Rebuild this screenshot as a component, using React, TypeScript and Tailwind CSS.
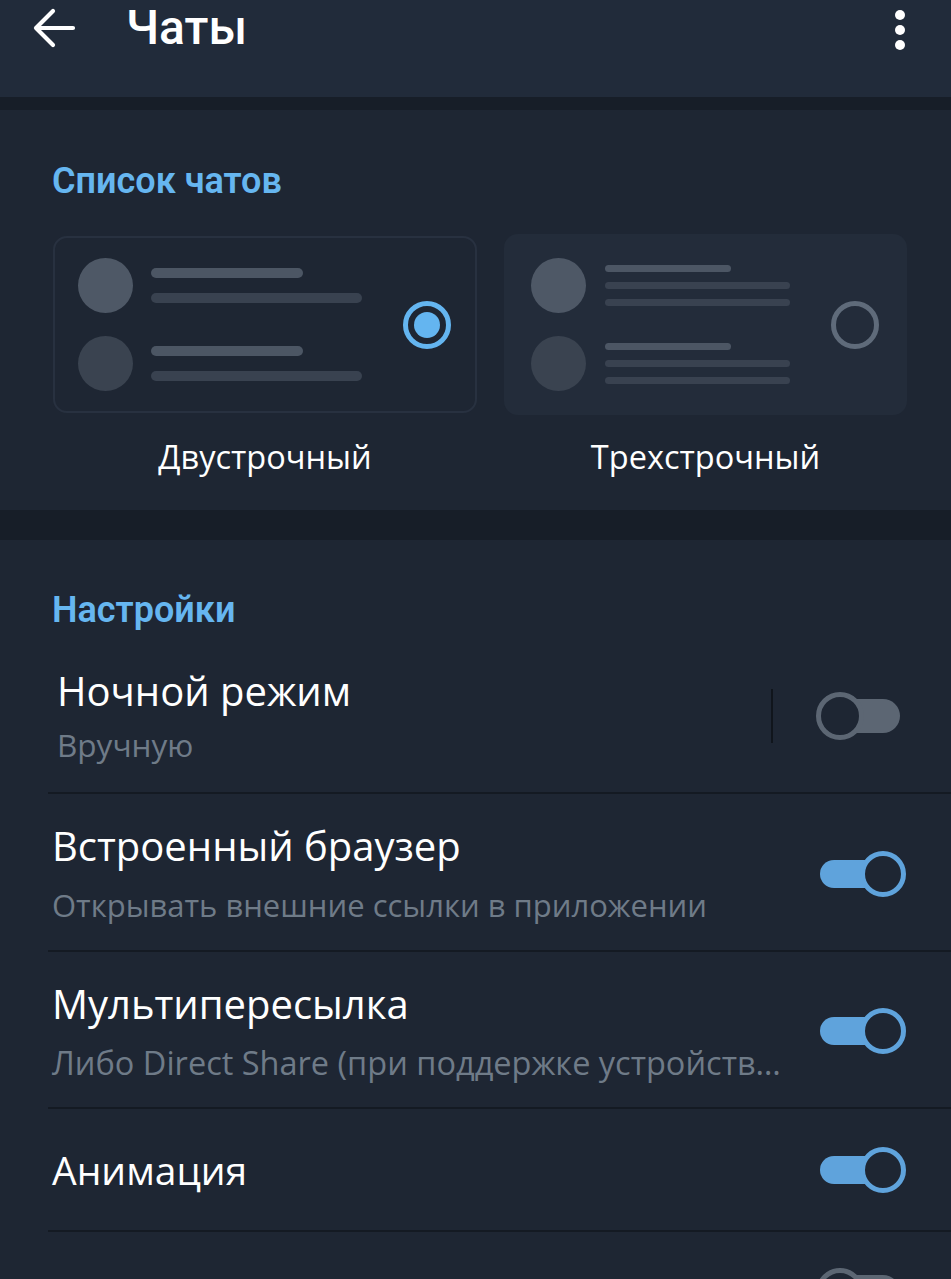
import React from "react";

const OPEN = { fontFamily: '"Open Sans", "Noto Sans", sans-serif' };
const ROBO = { fontFamily: 'Roboto, "Noto Sans", sans-serif' };

function ToggleOn() {
  return (
    <div className="relative w-[86px] h-[48px] flex items-center shrink-0">
      <div className="absolute left-0 right-[20px] h-[28px] rounded-full bg-[#5fa3dc]" />
      <div className="absolute right-0 w-[46px] h-[46px] rounded-full border-[5px] border-[#5fa3dc] bg-[#1e2633]" />
    </div>
  );
}

function ToggleOff() {
  return (
    <div className="relative w-[84px] h-[48px] flex items-center shrink-0">
      <div className="absolute left-[20px] right-0 h-[34px] rounded-full bg-[#5c6673]" />
      <div className="absolute left-0 w-[48px] h-[48px] rounded-full border-[5px] border-[#5c6673] bg-[#1e2633]" />
    </div>
  );
}

function Avatar({ c }: { c: string }) {
  return <div className={`w-[55px] h-[55px] rounded-full ${c}`} />;
}

export default function App() {
  return (
    <div className="w-[951px] h-[1279px] overflow-hidden bg-[#1e2633] text-white">
      {/* Header */}
      <div className="h-[97px] bg-[#212b3a] flex items-start pt-[4px] pl-[32px] pr-[46px]">
        <svg width="44" height="48" viewBox="0 0 44 48">
          <path d="M41 24H4M21 7L4 24l17 17" stroke="white" strokeWidth="4.2" fill="none" strokeLinecap="round" strokeLinejoin="round" />
        </svg>
        <div className="ml-[50px] text-[48px] leading-[48px] font-medium" style={ROBO}>Чаты</div>
        <div className="ml-auto flex flex-col items-center gap-[5px] pt-[6px]">
          <div className="w-[10px] h-[10px] rounded-full bg-white" />
          <div className="w-[10px] h-[10px] rounded-full bg-white" />
          <div className="w-[10px] h-[10px] rounded-full bg-white" />
        </div>
      </div>
      <div className="h-[13px] bg-[#171e28]" />

      {/* Section 1 */}
      <div className="h-[400px] bg-[#1e2633] pt-[49px]">
        <div className="pl-[52px] text-[36px] leading-[44px] font-semibold text-[#66b6f0]" style={ROBO}>Список чатов</div>
        <div className="flex items-start pl-[53px] gap-[27px] mt-[31px]">
          <div className="flex flex-col items-center">
            <div className="w-[424px] h-[177px] mt-[2px] rounded-[14px] border-2 border-[#283140] flex items-center pl-[23px] pr-[24px]">
              <div className="flex flex-col gap-[23px]">
                {[0, 1].map((i) => (
                  <div key={i} className="flex items-center gap-[18px]">
                    <Avatar c={i === 0 ? "bg-[#4e5866]" : "bg-[#3a4350]"} />
                    <div className="flex flex-col gap-[15px]">
                      <div className="w-[152px] h-[10px] rounded-full bg-[#4c5664]" />
                      <div className="w-[211px] h-[10px] rounded-full bg-[#394250]" />
                    </div>
                  </div>
                ))}
              </div>
              <div className="ml-auto w-[48px] h-[48px] rounded-full border-[5px] border-[#64b5f0] flex items-center justify-center">
                <div className="w-[26px] h-[26px] rounded-full bg-[#64b5f0]" />
              </div>
            </div>
            <div className="mt-[24px] text-[32.5px] leading-[40px]" style={OPEN}>Двустрочный</div>
          </div>
          <div className="flex flex-col items-center">
            <div className="w-[403px] h-[181px] rounded-[14px] bg-[#232c3a] flex items-center pl-[27px] pr-[28px]">
              <div className="flex flex-col gap-[23px]">
                {[0, 1].map((i) => (
                  <div key={i} className="flex items-center gap-[19px]">
                    <Avatar c={i === 0 ? "bg-[#4e5866]" : "bg-[#3a4350]"} />
                    <div className="flex flex-col gap-[10px]">
                      <div className="w-[126px] h-[7px] rounded-full bg-[#4c5664]" />
                      <div className="w-[185px] h-[7px] rounded-full bg-[#394250]" />
                      <div className="w-[185px] h-[7px] rounded-full bg-[#394250]" />
                    </div>
                  </div>
                ))}
              </div>
              <div className="ml-auto w-[48px] h-[48px] rounded-full border-[5px] border-[#5f6b7a]" />
            </div>
            <div className="mt-[22px] text-[32.5px] leading-[40px]" style={OPEN}>Трехстрочный</div>
          </div>
        </div>
      </div>
      <div className="h-[30px] bg-[#171e28]" />

      {/* Section 2 */}
      <div className="bg-[#1e2633] pt-[48px]">
        <div className="pl-[52px] text-[36px] leading-[44px] font-semibold text-[#66b6f0]" style={ROBO}>Настройки</div>

        <div className="ml-[48px] border-b-2 border-[#141a23] h-[162px] flex items-center pr-[51px] pt-[8px]">
          <div className="pl-[9px] flex flex-col gap-[10px]">
            <div className="text-[40px] leading-[48px]" style={OPEN}>Ночной режим</div>
            <div className="text-[31.5px] leading-[40px] text-[#6f7b88]" style={OPEN}>Вручную</div>
          </div>
          <div className="ml-auto w-[2px] h-[54px] bg-[#10151c] mr-[43px]" />
          <ToggleOff />
        </div>

        <div className="ml-[48px] border-b-2 border-[#141a23] h-[158px] flex items-center pr-[45px] pt-[3px]">
          <div className="pl-[4px] flex flex-col gap-[15px]">
            <div className="text-[40px] leading-[48px]" style={OPEN}>Встроенный браузер</div>
            <div className="text-[31px] leading-[40px] text-[#6f7b88]" style={OPEN}>Открывать внешние ссылки в приложении</div>
          </div>
          <div className="ml-auto" />
          <ToggleOn />
        </div>

        <div className="ml-[48px] border-b-2 border-[#141a23] h-[157px] flex items-center pr-[45px] pt-[3px]">
          <div className="pl-[4px] flex flex-col gap-[15px]">
            <div className="text-[40px] leading-[48px]" style={OPEN}>Мультипересылка</div>
            <div className="text-[32.5px] leading-[40px] text-[#6f7b88] whitespace-nowrap" style={OPEN}>Либо Direct Share (при поддержке устройств…</div>
          </div>
          <div className="ml-auto" />
          <ToggleOn />
        </div>

        <div className="ml-[48px] border-b-2 border-[#141a23] h-[123px] flex items-center pr-[45px]">
          <div className="pl-[4px] text-[39px] leading-[48px]" style={OPEN}>Анимация</div>
          <div className="ml-auto" />
          <ToggleOn />
        </div>

        <div className="ml-[48px] h-[120px] flex items-center pr-[51px]">
          <div className="ml-auto" />
          <ToggleOff />
        </div>
      </div>
    </div>
  );
}
